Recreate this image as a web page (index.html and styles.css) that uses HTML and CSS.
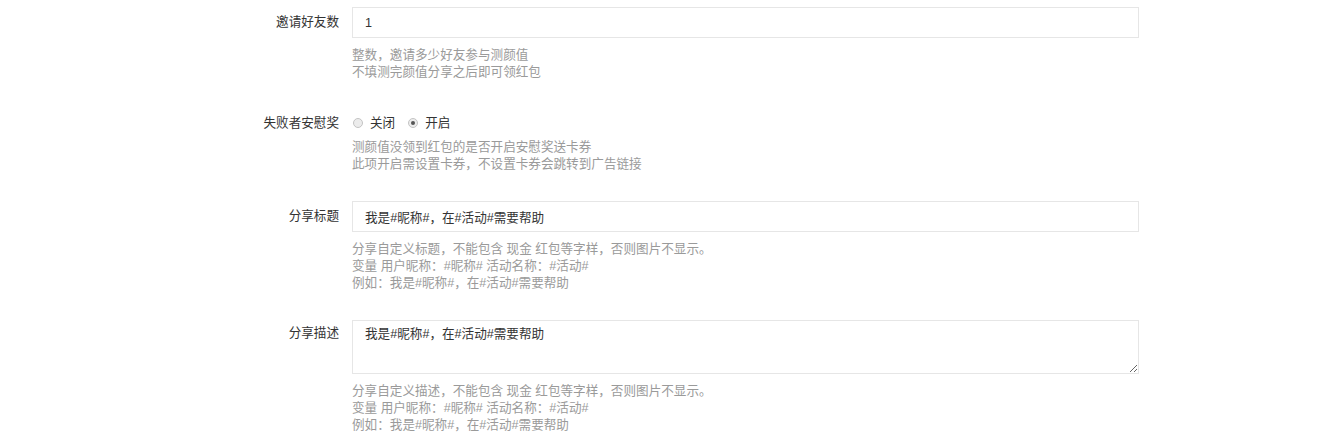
FILE: index.html
```html
<!DOCTYPE html>
<html lang="zh-CN">
<head>
  <meta charset="UTF-8" />
  <title>活动设置</title>
  <link rel="stylesheet" href="styles.css">
</head>
<body>

<form class="form-horizontal">
  <div class="form-group">
    <label class="control-label">邀请好友数</label>
    <div class="field">
      <input type="text" class="form-control" value="1">
      <div class="help-block">
        整数，邀请多少好友参与测颜值<br>
        不填测完颜值分享之后即可领红包
      </div>
    </div>
  </div>

  <div class="form-group">
    <label class="control-label label-radio">失败者安慰奖</label>
    <div class="field">
      <div class="radio-row">
        <label class="radio-inline"><input type="radio" name="comfort" value="0"> 关闭</label>
        <label class="radio-inline"><input type="radio" name="comfort" value="1" checked> 开启</label>
      </div>
      <div class="help-block">
        测颜值没领到红包的是否开启安慰奖送卡券<br>
        此项开启需设置卡券，不设置卡券会跳转到广告链接
      </div>
    </div>
  </div>

  <div class="form-group">
    <label class="control-label">分享标题</label>
    <div class="field">
      <input type="text" class="form-control" value="我是#昵称#，在#活动#需要帮助">
      <div class="help-block">
        分享自定义标题，不能包含 现金 红包等字样，否则图片不显示。<br>
        变量 用户昵称：#昵称# 活动名称：#活动#<br>
        例如：我是#昵称#，在#活动#需要帮助
      </div>
    </div>
  </div>

  <div class="form-group">
    <label class="control-label label-top">分享描述</label>
    <div class="field">
      <textarea class="form-control textarea">我是#昵称#，在#活动#需要帮助</textarea>
      <div class="help-block">
        分享自定义描述，不能包含 现金 红包等字样，否则图片不显示。<br>
        变量 用户昵称：#昵称# 活动名称：#活动#<br>
        例如：我是#昵称#，在#活动#需要帮助
      </div>
    </div>
  </div>
</form>

</body>
</html>
```

FILE: styles.css
```css
body {
  font-family: "Liberation Sans", "Noto Sans CJK SC", sans-serif;
  font-size: 12.6px;
  color: #333;
  background: #fff;
  margin: 0;
  padding: 0;
}

.form-horizontal {
  padding-top: 7px;
}

.form-group {
  display: flex;
  margin-bottom: 28px;
}

.form-group.tight {
  margin-bottom: 26px;
}

.control-label {
  width: 352px;
  flex-shrink: 0;
  box-sizing: border-box;
  padding-right: 13px;
  text-align: right;
  line-height: 31px;
}

.label-radio {
  line-height: 14px;
  padding-top: 7px;
}

.label-top {
  line-height: 18px;
  padding-top: 4px;
}

.field {
  width: 787px;
}

.form-control {
  display: block;
  width: 100%;
  height: 31px;
  box-sizing: border-box;
  border: 1px solid #e6e6e6;
  padding: 0 12px;
  font-family: inherit;
  font-size: 12.6px;
  color: #333;
  outline: none;
  margin: 0;
}

.textarea {
  height: 54px;
  padding-top: 4px;
  line-height: 18px;
  resize: vertical;
}

.help-block {
  margin-top: 9px;
  line-height: 17px;
  color: #9a9a9a;
}

.radio-row {
  display: flex;
  gap: 12px;
  height: 14px;
  line-height: 14px;
  padding-top: 7px;
}

.radio-inline {
  display: flex;
  align-items: center;
}

.radio-inline input {
  appearance: none;
  -webkit-appearance: none;
  width: 10px;
  height: 10px;
  margin: 0 7px 0 1px;
  border: 1px solid #c4c4c4;
  border-radius: 50%;
  background: #ececec;
  box-sizing: border-box;
  position: relative;
}

.radio-inline input:checked::after {
  content: "";
  position: absolute;
  left: 2px;
  top: 2px;
  width: 4px;
  height: 4px;
  border-radius: 50%;
  background: #555;
}
```
